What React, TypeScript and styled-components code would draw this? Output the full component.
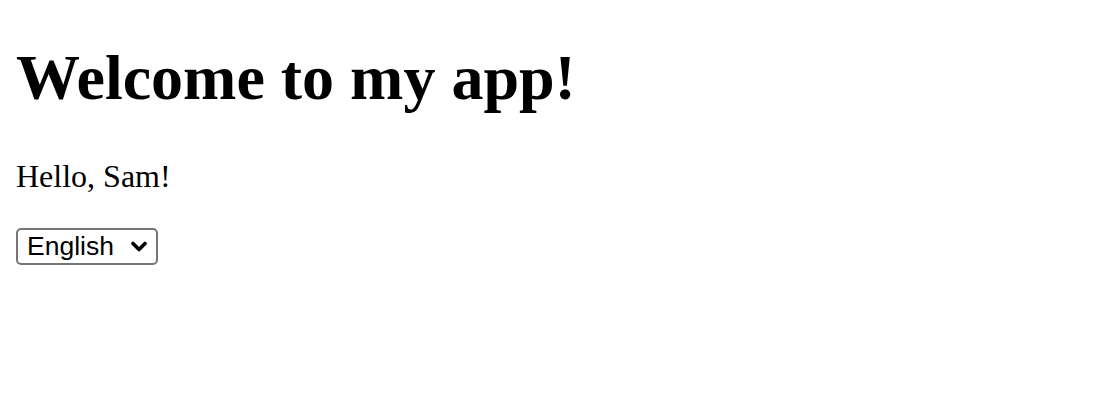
import styled, { createGlobalStyle } from 'styled-components'
import { useState } from 'react'

const GlobalStyle = createGlobalStyle`
  body {
    margin: 16px;
    background: #fff;
    color: #000;
    font-family: "Liberation Serif", "Times New Roman", serif;
  }
`

const Title = styled.h1`
  font-size: 64px;
  font-weight: 700;
  margin: 25px 0 42.88px;
  line-height: normal;
`

const Greeting = styled.p`
  font-size: 32px;
  margin: 32px 0;
  line-height: normal;
`

const SelectWrap = styled.div`
  position: relative;
  display: inline-block;
  margin-top: 1px;
`

const LanguageSelect = styled.select`
  appearance: none;
  -webkit-appearance: none;
  box-sizing: border-box;
  width: 142px;
  height: 37px;
  padding: 0 0 0 9px;
  font-family: "Liberation Sans", Arial, sans-serif;
  font-size: 26.5px;
  color: #000;
  background: #fff;
  border: 2px solid #767676;
  border-radius: 5px;
  outline: none;
`

const Chevron = styled.svg`
  position: absolute;
  right: 10px;
  top: 13px;
  width: 18px;
  height: 12px;
  pointer-events: none;
`

export default function App() {
  const [lang, setLang] = useState('en')
  return (
    <>
      <GlobalStyle />
      <Title>Welcome to my app!</Title>
      <Greeting>Hello, Sam!</Greeting>
      <SelectWrap>
        <LanguageSelect value={lang} onChange={(e) => setLang(e.target.value)}>
          <option value='en'>English</option>
          <option value='es'>Español</option>
          <option value='fr'>Français</option>
        </LanguageSelect>
        <Chevron viewBox='0 0 18 12'>
          <path d='M3 2.5 L9 8.5 L15 2.5' fill='none' stroke='#000' strokeWidth='3.6' strokeLinecap='round' strokeLinejoin='round' />
        </Chevron>
      </SelectWrap>
    </>
  )
}
